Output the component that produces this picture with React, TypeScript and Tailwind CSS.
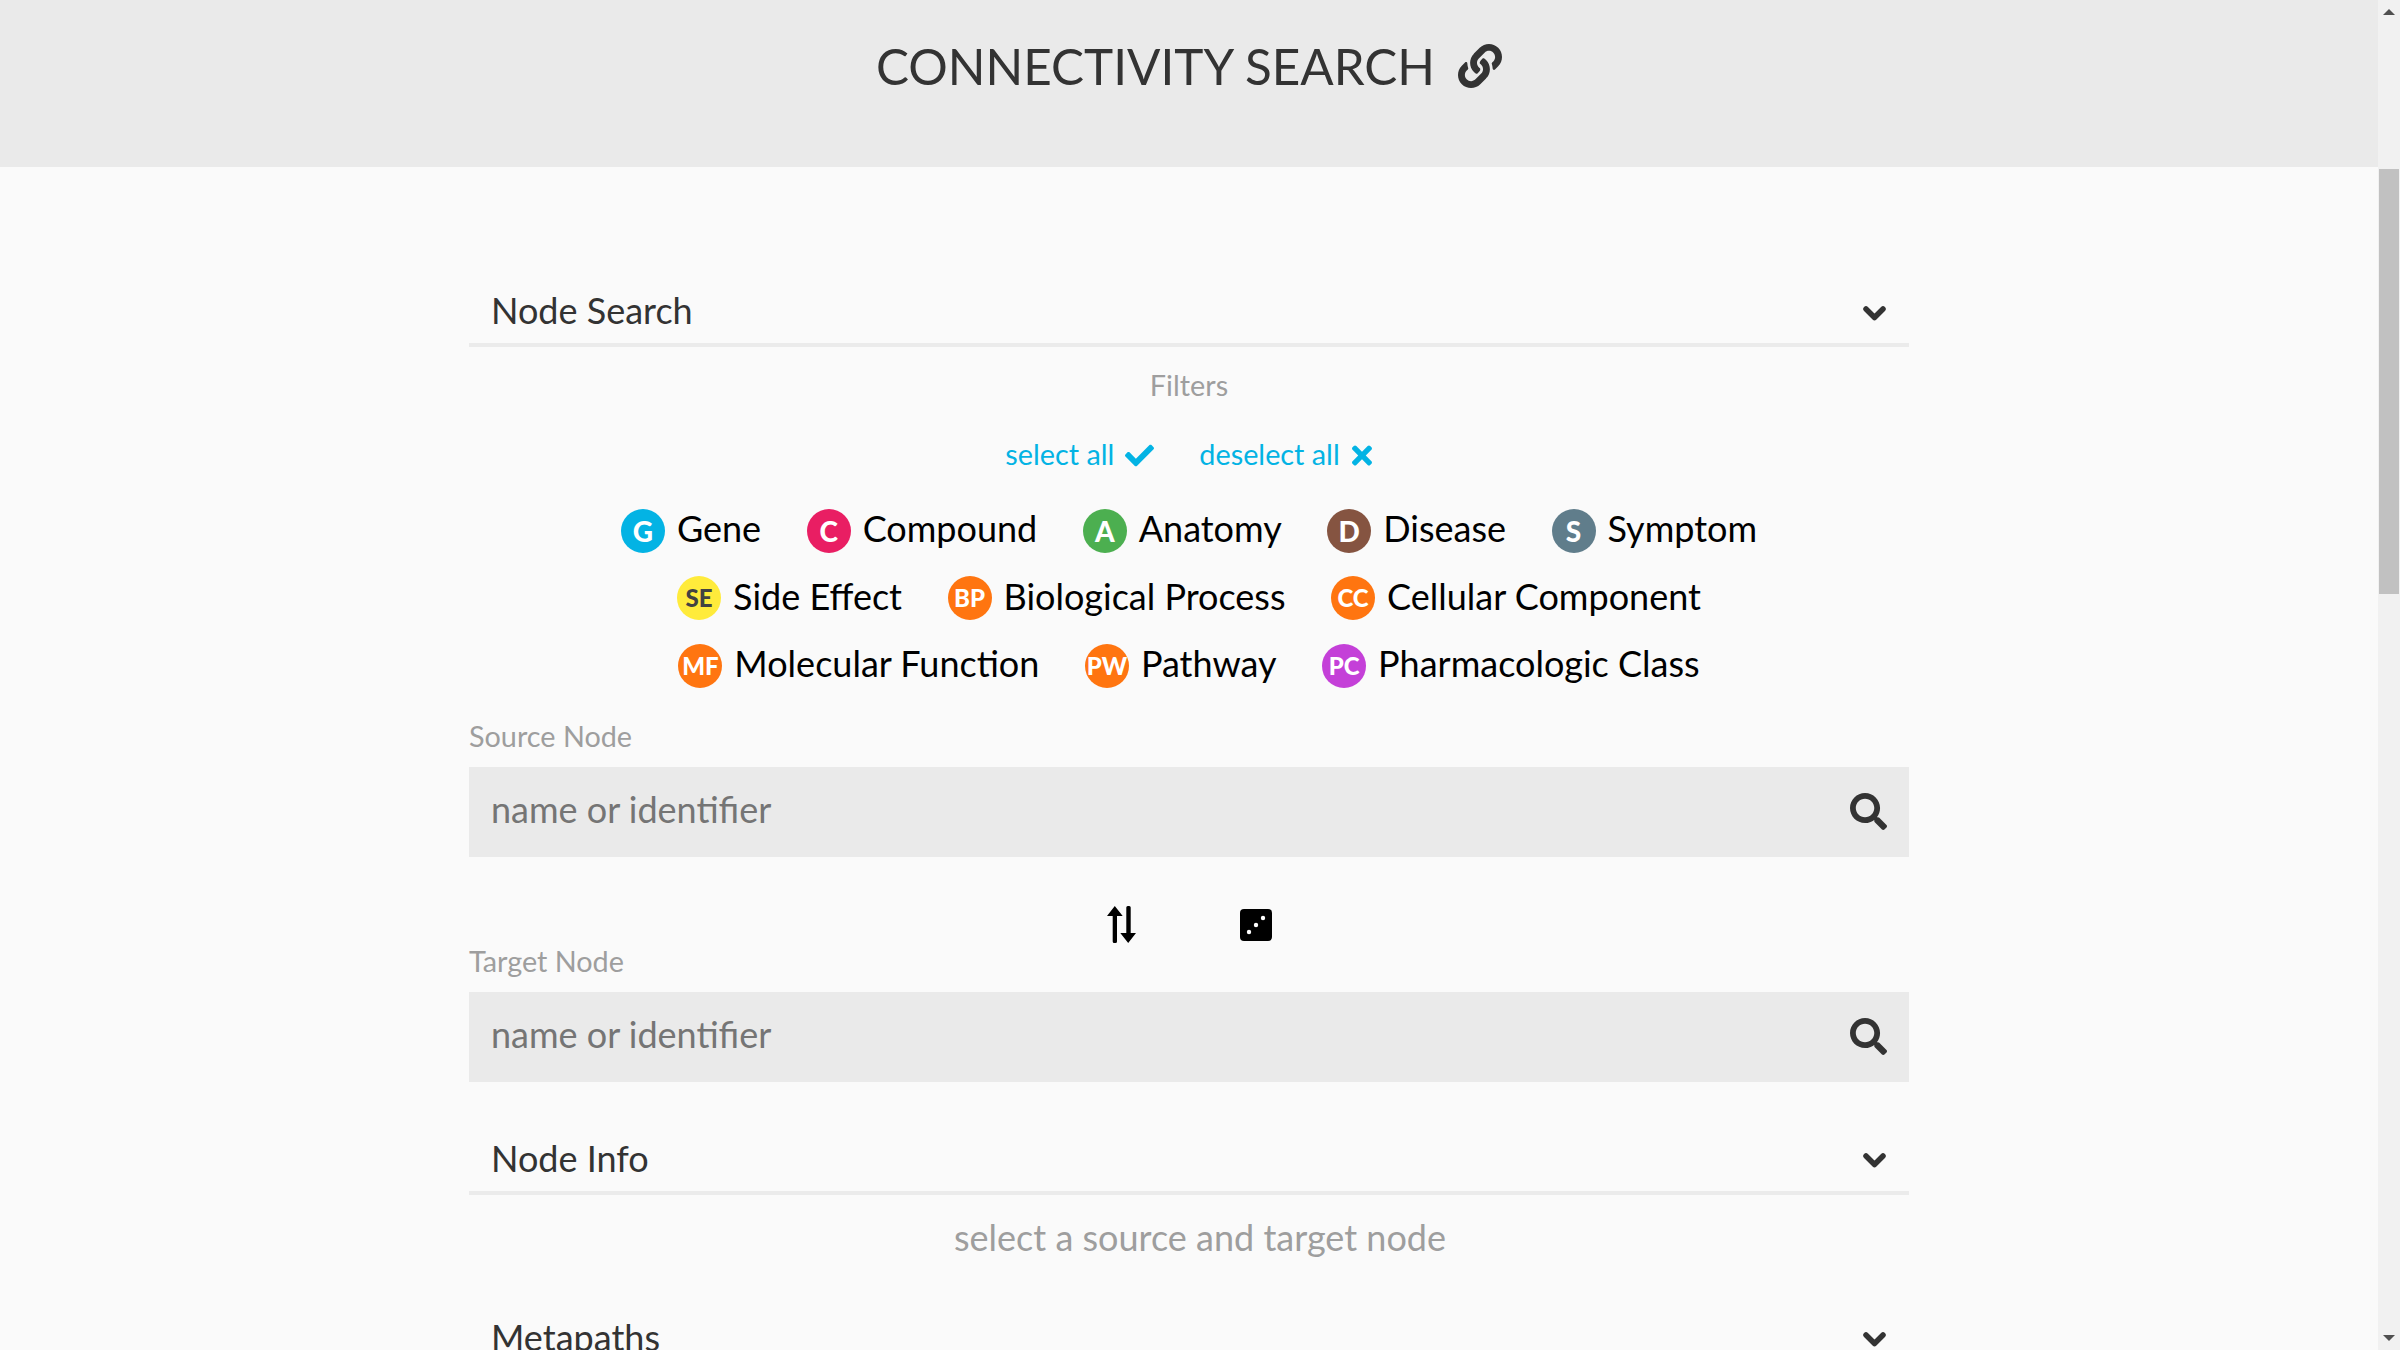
import { FaCheck, FaLink, FaSearch, FaTimes } from "react-icons/fa";

const ROWS = [
  [
    { code: "G", label: "Gene", bg: "bg-[#03b3e4]", fg: "text-white" },
    { code: "C", label: "Compound", bg: "bg-[#e91e63]", fg: "text-white" },
    { code: "A", label: "Anatomy", bg: "bg-[#4caf50]", fg: "text-white" },
    { code: "D", label: "Disease", bg: "bg-[#855441]", fg: "text-white" },
    { code: "S", label: "Symptom", bg: "bg-[#607d8b]", fg: "text-white" },
  ],
  [
    { code: "SE", label: "Side Effect", bg: "bg-[#ffeb3b]", fg: "text-[#424242]" },
    { code: "BP", label: "Biological Process", bg: "bg-[#ff7510]", fg: "text-white" },
    { code: "CC", label: "Cellular Component", bg: "bg-[#ff7510]", fg: "text-white" },
  ],
  [
    { code: "MF", label: "Molecular Function", bg: "bg-[#ff7510]", fg: "text-white" },
    { code: "PW", label: "Pathway", bg: "bg-[#ff7510]", fg: "text-white" },
    { code: "PC", label: "Pharmacologic Class", bg: "bg-[#c440d8]", fg: "text-white" },
  ],
];

function SectionHeader({ title }: { title: string }) {
  return (
    <div className="flex h-[64px] items-center justify-between border-b-4 border-[#ebebeb] pl-[22px] pr-[23px] text-[36px] text-[#333333]">
      <span className="pb-[6px]">{title}</span>
      {/* chevron is heavier than the fa one */}
      <svg viewBox="0 0 23 15" className="h-[15px] w-[23px]" fill="none" stroke="#333333" strokeWidth="5.5" strokeLinecap="round" strokeLinejoin="round">
        <path d="M3 3 L11.5 11.5 L20 3" />
      </svg>
    </div>
  );
}

function NodeInput({ label }: { label: string }) {
  return (
    <div>
      <div className="h-[32px] text-[28.8px] leading-[32px] text-[#9e9e9e]">{label}</div>
      <div className="mt-[15px] flex h-[90px] items-center justify-between bg-[#eaeaea] pl-[22px] pr-[22px] text-[36px] text-[#757575]">
        <span className="pb-[6px]">name or identifier</span>
        <FaSearch className="h-[37px] w-[37px] text-[#333333]" />
      </div>
    </div>
  );
}

export default function App() {
  return (
    <div className="flex h-screen overflow-hidden bg-[#fafafa] font-['Lato',sans-serif]">
      <main className="min-w-0 flex-1">
        <header className="flex h-[167px] justify-center bg-[#eaeaea] pt-[38px]">
          <div className="flex h-[56px] items-center gap-[23px] text-[49.4px] text-[#333333]">
            <span>CONNECTIVITY SEARCH</span>
            <FaLink className="h-[44px] w-[44px]" />
          </div>
        </header>

        <div className="mx-auto w-[1440px] pt-[116px]">
          <SectionHeader title="Node Search" />

          <div className="mt-[20px] h-[36px] text-center text-[28.8px] leading-[36px] text-[#9e9e9e]">Filters</div>

          <div className="mt-[34px] flex h-[36px] items-center justify-center gap-[45px] text-[28.8px] text-[#03b3e4]">
            <span className="flex items-center gap-[11px]">
              select all <FaCheck className="h-[29px] w-[29px]" />
            </span>
            <span className="flex items-center gap-[11px]">
              deselect all <FaTimes className="h-[29px] w-[22px]" />
            </span>
          </div>

          <div className="mt-[24px] flex flex-col">
            {ROWS.map((row, i) => (
              <div key={i} className="flex h-[67.5px] items-center justify-center gap-[45.5px]">
                {row.map((item) => (
                  <div key={item.code} className="flex items-center gap-[12px] text-[36px] text-black">
                    <span
                      className={`flex h-[44px] w-[44px] items-center justify-center rounded-full font-black ${
                        item.code.length > 1 ? "text-[24px]" : "text-[28px]"
                      } ${item.bg} ${item.fg}`}
                    >
                      {item.code}
                    </span>
                    <span className="pb-[5px]">{item.label}</span>
                  </div>
                ))}
              </div>
            ))}
          </div>

          <div className="mt-[20px]">
            <NodeInput label="Source Node" />
          </div>

          <div className="flex h-[136px] items-center justify-center gap-[104px]">
            <svg viewBox="0 0 29 37" className="h-[37px] w-[29px]" fill="black">
              <path d="M7.8 0 L15.7 10 L10 10 L10 35.5 Q10 37 8.5 37 H7.2 Q5.7 37 5.7 35.5 L5.7 10 L0 10 Z" />
              <path d="M21.2 37 L13.3 27 L19.3 27 L19.3 1.5 Q19.3 0 20.8 0 H22.2 Q23.7 0 23.7 1.5 L23.7 27 L29 27 Z" />
            </svg>
            <svg viewBox="0 0 32 32" className="h-[32px] w-[32px]">
              <rect width="32" height="32" rx="4" fill="black" />
              <circle cx="9" cy="23" r="2.2" fill="white" />
              <circle cx="16" cy="16" r="2.2" fill="white" />
              <circle cx="23" cy="9" r="2.2" fill="white" />
            </svg>
          </div>

          <div className="-mt-[48px]">
            <NodeInput label="Target Node" />
          </div>

          <div className="mt-[49px]">
            <SectionHeader title="Node Info" />
          </div>

          <div className="mt-[20px] h-[44px] pl-[22px] text-center text-[36px] leading-[44px] text-[#9e9e9e]">
            select a source and target node
          </div>

          <div className="mt-[51px]">
            <SectionHeader title="Metapaths" />
          </div>
        </div>
      </main>

      <aside className="relative flex w-[22px] shrink-0 flex-col items-center bg-[#f1f1f1]">
        <svg viewBox="0 0 12 6" className="mt-[9px] h-[6px] w-[12px]" fill="#505050">
          <path d="M6 0 L12 6 H0 Z" />
        </svg>
        <div className="mt-[154px] h-[425px] w-[20px] bg-[#c1c1c1]" />
        <svg viewBox="0 0 12 6" className="absolute bottom-[9px] h-[6px] w-[12px]" fill="#505050">
          <path d="M0 0 H12 L6 6 Z" />
        </svg>
      </aside>
    </div>
  );
}
